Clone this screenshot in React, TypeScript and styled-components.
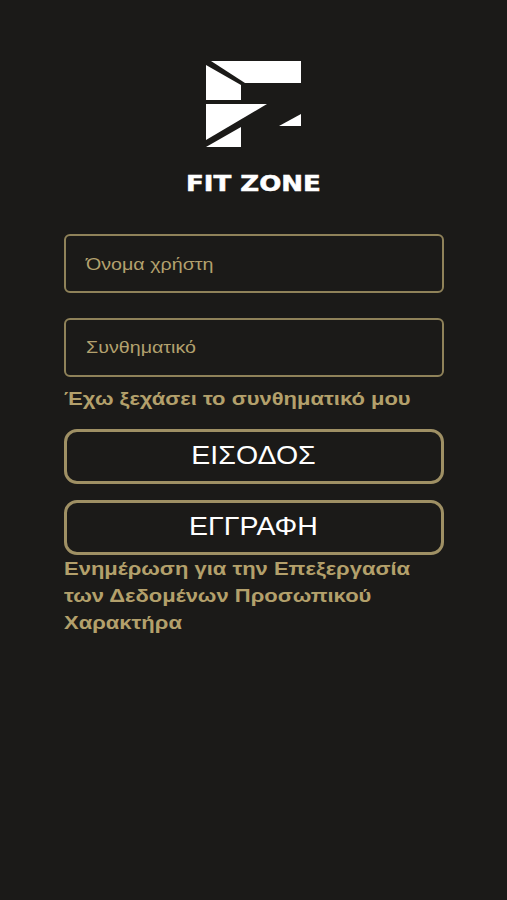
import React from 'react';
import styled, { createGlobalStyle, css } from 'styled-components';

const GlobalStyle = createGlobalStyle`
  html, body {
    margin: 0;
    padding: 0;
    background: #1b1a18;
  }
  * {
    box-sizing: border-box;
  }
`;

const App = () => {
  return (
    <Screen>
      <GlobalStyle />
      <Logo viewBox="0 0 95 86" aria-hidden="true">
        <polygon points="5,0 95,0 95,22 39,22" />
        <polygon points="0,4 35,24 35,39 0,39" />
        <polygon points="0,43 61,43 0,79" />
        <polygon points="35,66 35,86 0,86" />
        <polygon points="95,53 95,65 73,65" />
      </Logo>
      <Brand>FIT ZONE</Brand>
      <Form onSubmit={(e) => e.preventDefault()}>
        <Field>
          <Hint>Όνομα χρήστη</Hint>
        </Field>
        <Field>
          <Hint>Συνθηματικό</Hint>
        </Field>
        <ForgotLink href="#">Έχω ξεχάσει το συνθηματικό μου</ForgotLink>
        <Button type="submit">
          <ButtonLabel>ΕΙΣΟΔΟΣ</ButtonLabel>
        </Button>
        <Button type="button">
          <ButtonLabel>ΕΓΓΡΑΦΗ</ButtonLabel>
        </Button>
        <PrivacyLink href="#">
          Ενημέρωση για την Επεξεργασία των Δεδομένων Προσωπικού Χαρακτήρα
        </PrivacyLink>
      </Form>
    </Screen>
  );
};

const wideText = css`
  transform: scaleX(1.157);
  transform-origin: left center;
`;

const Screen = styled.div`
  width: 507px;
  height: 900px;
  overflow: hidden;
  padding-top: 61px;
  display: flex;
  flex-direction: column;
  align-items: center;
  background: #1b1a18;
  font-family: 'Liberation Sans', Arial, sans-serif;
`;

const Logo = styled.svg`
  width: 95px;
  height: 86px;
  fill: #ffffff;
`;

const Brand = styled.div`
  margin-top: 24px;
  font-family: 'DejaVu Sans', sans-serif;
  font-weight: 700;
  font-size: 21px;
  line-height: 27px;
  color: #ffffff;
  -webkit-text-stroke: 0.5px #ffffff;
  transform: scaleX(1.24);
`;

const Form = styled.form`
  width: 380px;
  margin-top: 36px;
  display: flex;
  flex-direction: column;
`;

const Field = styled.label`
  display: flex;
  align-items: center;
  width: 100%;
  height: 59px;
  margin-bottom: 25px;
  padding: 2px 20px 0;
  border: 2px solid #8f8259;
  border-radius: 6px;

  &:nth-of-type(2) {
    margin-bottom: 0;
    padding-top: 1px;
  }
`;

const Hint = styled.span`
  ${wideText}
  font-size: 17px;
  color: #b3a16e;
`;

const ForgotLink = styled.a`
  ${wideText}
  width: 330px;
  margin-top: 11px;
  font-size: 19px;
  font-weight: 700;
  line-height: 21px;
  color: #b3a06b;
  text-decoration: none;
`;

const Button = styled.button`
  width: 100%;
  height: 55px;
  margin-top: 20px;
  padding: 0 0 2px;
  border: 3px solid #9f9064;
  border-radius: 13px;
  background: transparent;
  font-family: inherit;
  cursor: pointer;

  & + & {
    margin-top: 16px;
  }
`;

const ButtonLabel = styled.span`
  display: inline-block;
  font-size: 25px;
  color: #ffffff;
  transform: scaleX(1.14);
`;

const PrivacyLink = styled.a`
  ${wideText}
  width: 300px;
  font-size: 19px;
  font-weight: 700;
  line-height: 27px;
  color: #b3a06b;
  text-decoration: none;
`;

export default App;
